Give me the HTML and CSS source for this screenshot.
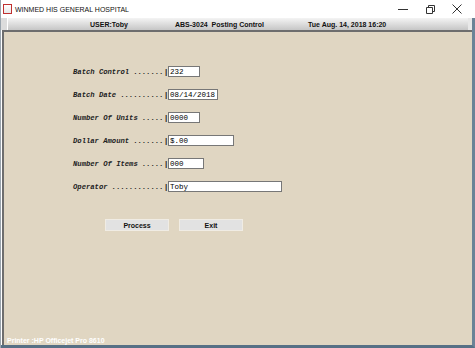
FILE: index.html
```html
<!DOCTYPE html>
<html lang="en">
<head>
  <meta charset="UTF-8" />
  <title>WINMED HIS GENERAL HOSPITAL</title>
  <link rel="stylesheet" href="styles.css">
</head>
<body>
  <div class="window">
    <div class="titlebar">
      <span class="app-icon"></span>
      <span class="title">WINMED HIS GENERAL HOSPITAL</span>
      <div class="controls">
        <svg width="10" height="10" viewBox="0 0 10 10"><path d="M0 5.5h10" stroke="#333" stroke-width="1"/></svg>
        <svg width="10" height="10" viewBox="0 0 10 10"><path d="M1.5 3.5h6v6h-6z M3.5 3.5v-2h6v6h-2" stroke="#333" fill="none" stroke-width="1"/></svg>
        <svg width="10" height="10" viewBox="0 0 10 10"><path d="M0.5 0.5l9 9 M9.5 0.5l-9 9" stroke="#333" stroke-width="1"/></svg>
      </div>
    </div>

    <div class="frame">
      <div class="statusbar">
        <span class="tick"></span>
        <div class="status">
          <span class="user">USER:Toby</span>
          <span class="screen">ABS-3024&nbsp;&nbsp;Posting Control</span>
          <span class="stamp">Tue Aug. 14, 2018 16:20</span>
        </div>
      </div>

      <div class="content">
        <form class="form">
          <div class="row"><label>Batch Control .......</label><span class="bar">|</span><input class="w32" value="232"></div>
          <div class="row"><label>Batch Date ..........</label><span class="bar">|</span><input class="w50" value="08/14/2018"></div>
          <div class="row"><label>Number Of Units .....</label><span class="bar">|</span><input class="w32" value="0000"></div>
          <div class="row"><label>Dollar Amount .......</label><span class="bar">|</span><input class="w66" value="$.00"></div>
          <div class="row"><label>Number Of Items .....</label><span class="bar">|</span><input class="w36" value="000"></div>
          <div class="row"><label>Operator ............</label><span class="bar">|</span><input class="w114" value="Toby"></div>
        </form>

        <div class="buttons">
          <button type="button">Process</button>
          <button type="button">Exit</button>
        </div>

        <div class="printer">Printer :HP Officejet Pro 8610</div>
      </div>
    </div>
  </div>
</body>
</html>
```

FILE: styles.css
```css
body {
  margin: 0;
  font-family: "Liberation Sans", Arial, sans-serif;
  background: #fff;
}

.window {
  width: 475px;
  height: 348px;
  display: flex;
  flex-direction: column;
  box-sizing: border-box;
  border-left: 1px solid #9aa4ad;
  background: #fff;
}

.titlebar {
  height: 18px;
  display: flex;
  align-items: center;
  padding-left: 2px;
  font-size: 7px;
  color: #111;
}

.app-icon {
  width: 7px;
  height: 8px;
  border: 1px solid #c03030;
  background: linear-gradient(#fff, #e8e8e8);
  margin-right: 3px;
}

.controls {
  margin-left: auto;
  display: flex;
  gap: 17px;
  padding-right: 13px;
}

.controls svg {
  display: block;
}

.frame {
  flex: 1;
  display: flex;
  flex-direction: column;
  border-right: 3px solid #6b8397;
  border-bottom: 3px solid #577085;
}

.statusbar {
  height: 12px;
  display: flex;
  background: #e8e8e8;
}

.tick {
  width: 6px;
  border-right: 1px solid #fff;
  background: #dcdcdc;
}

.status {
  flex: 1;
  display: flex;
  align-items: center;
  margin-right: 4px;
  background: linear-gradient(#f4f4f4, #c6c6c6);
  font-size: 7px;
  font-weight: bold;
  color: #111;
}

.user {
  margin-left: 82px;
}

.screen {
  margin-left: 47px;
}

.stamp {
  margin-left: 44px;
}

.content {
  flex: 1;
  display: flex;
  flex-direction: column;
  background: #e0d6c2;
  border-top: 2px solid #6e6e6e;
  border-left: 2px solid #6e6e6e;
  margin-left: 1px;
}

.form {
  display: flex;
  flex-direction: column;
  gap: 12px;
  padding: 34px 0 0 69px;
}

.row {
  display: flex;
  align-items: center;
  height: 11px;
}

.row label {
  flex-shrink: 0;
  white-space: pre;
  font-family: "Liberation Mono", "Courier New", monospace;
  font-style: italic;
  font-weight: bold;
  font-size: 7.2px;
  color: #222;
  width: 92px;
}

.bar {
  font-family: "Liberation Sans", Arial, sans-serif;
  font-size: 8px;
  font-weight: bold;
  color: #222;
  width: 3px;
}

.row input {
  box-sizing: border-box;
  height: 11px;
  padding: 0 1px;
  border: 1px solid #777;
  background: #fff;
  font-family: "Liberation Mono", "Courier New", monospace;
  font-size: 7.5px;
  color: #000;
}

.w32 { width: 32px; }
.w36 { width: 36px; }
.w50 { width: 50px; }
.w66 { width: 66px; }
.w114 { width: 114px; }

.buttons {
  display: flex;
  gap: 10px;
  padding: 27px 0 0 101px;
}

.buttons button {
  width: 64px;
  height: 12px;
  padding: 0;
  border: 1px solid #f0ece4;
  background: #e2e2e2;
  font-family: "Liberation Sans", Arial, sans-serif;
  font-size: 7px;
  font-weight: bold;
  color: #111;
}

.printer {
  margin-top: auto;
  padding: 0 0 1px 3px;
  font-size: 7px;
  font-weight: bold;
  color: #fff;
}
```
